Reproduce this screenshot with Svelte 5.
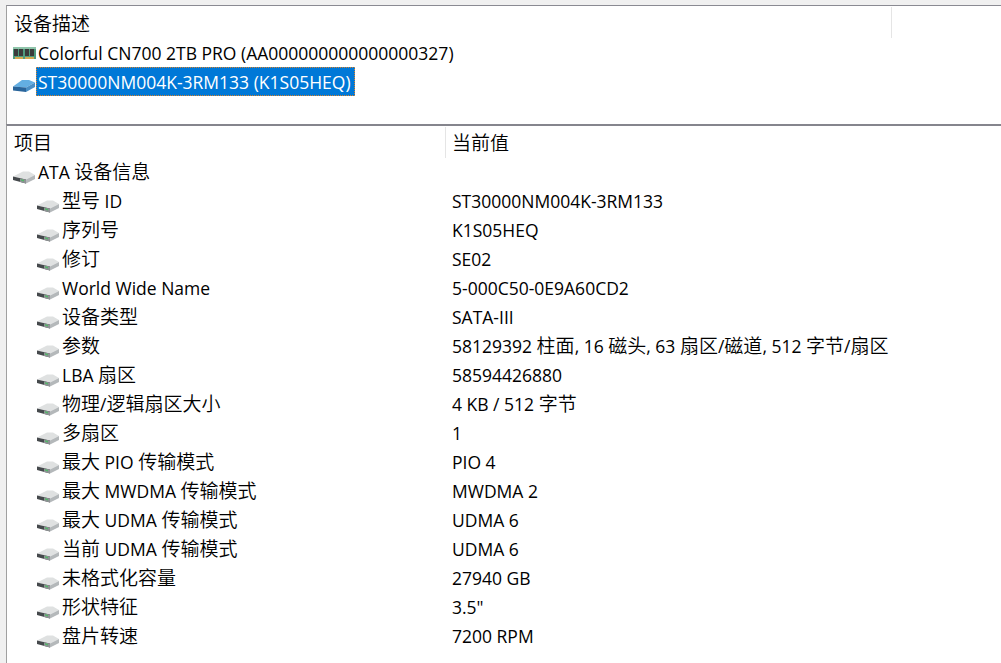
<script>
  const rows = [
    ['型号 ID', 'ST30000NM004K-3RM133'],
    ['序列号', 'K1S05HEQ'],
    ['修订', 'SE02'],
    ['World Wide Name', '5-000C50-0E9A60CD2'],
    ['设备类型', 'SATA-III'],
    ['参数', '58129392 柱面, 16 磁头, 63 扇区/磁道, 512 字节/扇区'],
    ['LBA 扇区', '58594426880'],
    ['物理/逻辑扇区大小', '4 KB / 512 字节'],
    ['多扇区', '1'],
    ['最大 PIO 传输模式', 'PIO 4'],
    ['最大 MWDMA 传输模式', 'MWDMA 2'],
    ['最大 UDMA 传输模式', 'UDMA 6'],
    ['当前 UDMA 传输模式', 'UDMA 6'],
    ['未格式化容量', '27940 GB'],
    ['形状特征', '3.5"'],
    ['盘片转速', '7200 RPM'],
  ]

  // Chinese runs are set larger than the Latin ones
  const runs = (text) => text.match(/[\u4e00-\u9fff]+|[^\u4e00-\u9fff]+/g) ?? []
  const isCjk = (run) => /[\u4e00-\u9fff]/.test(run)
</script>

{#snippet txt(text)}
  {#each runs(text) as run}<span class:cjk={isCjk(run)}>{run}</span>{/each}
{/snippet}

{#snippet driveIcon()}
  <svg class="icon" width="24" height="24" viewBox="0 0 24 24">
    <path d="M1 15.5 L11 10.5 H17 L23 14 L14 18.5Z" fill="#dfe1e1"/>
    <path d="M1 15.5 L14 18.5 V22.5 L1 19Z" fill="#45494c"/>
    <path d="M8 17.5 L14 18.5 V22.5 L8 21Z" fill="#8f9395"/>
    <path d="M14 18.5 L23 14 V18 L14 22.5Z" fill="#b4b8ba"/>
    <path d="M9 18.2 L12 19 V20.4 L9 19.6Z" fill="#4fb765"/>
  </svg>
{/snippet}

<div class="window">
  <section class="devices">
    <div class="head">
      <div class="col-device">{@render txt('设备描述')}</div>
    </div>
    <div class="device">
      <svg class="icon" width="24" height="24" viewBox="0 0 24 24">
        <rect x="1" y="6" width="23" height="12" fill="#4f9c7e"/>
        <rect x="1" y="6" width="23" height="2" fill="#8fc4aa"/>
        <rect x="2" y="8" width="4" height="7" fill="#3b3b3b"/>
        <rect x="7" y="8" width="4" height="7" fill="#3b3b3b"/>
        <rect x="13" y="8" width="4" height="7" fill="#3b3b3b"/>
        <rect x="18" y="8" width="4" height="7" fill="#3b3b3b"/>
        <rect x="3" y="16" width="8" height="2" fill="#d3a94f"/>
        <rect x="13" y="16" width="9" height="2" fill="#d3a94f"/>
      </svg>
      <span class="label">Colorful CN700 2TB PRO (AA000000000000000327)</span>
    </div>
    <div class="device">
      <svg class="icon" width="24" height="24" viewBox="0 0 24 24">
        <path d="M1 16.5 L10 10 H17 L23 12.5 L14 17.5Z" fill="#63aee2"/>
        <path d="M1 16.5 L14 17.5 V22 L1 20.5Z" fill="#2a659b"/>
        <path d="M14 17.5 L23 12.5 V17 L14 22Z" fill="#4a8fc6"/>
      </svg>
      <span class="label selected">ST30000NM004K-3RM133 (K1S05HEQ)</span>
    </div>
  </section>

  <section class="details">
    <div class="head">
      <div class="col-name">{@render txt('项目')}</div>
      <div class="col-value">{@render txt('当前值')}</div>
    </div>
    <div class="row group">
      <div class="col-name">{@render driveIcon()}<span class="label">{@render txt('ATA 设备信息')}</span></div>
    </div>
    {#each rows as [name, value]}
      <div class="row">
        <div class="col-name child">{@render driveIcon()}<span class="label">{@render txt(name)}</span></div>
        <div class="col-value">{@render txt(value)}</div>
      </div>
    {/each}
  </section>
</div>

<style>
  :global(body) {
    background: #f0f0f0;
    overflow: hidden;
  }
  .window {
    box-sizing: border-box;
    height: 663px;
    padding: 5px 0 0 6px;
    display: flex;
    flex-direction: column;
    font-family: "Open Sans", "Noto Sans CJK SC", sans-serif;
    font-size: 17.5px;
    color: #000;
    white-space: nowrap;
  }
  .cjk {
    font-size: 19px;
    line-height: 1;
    font-family: "Noto Sans CJK SC", sans-serif;
    font-weight: 350;
  }
  .devices {
    height: 118px;
    flex: none;
    background: #fff;
    border-top: 1px solid #8a8a92;
    border-left: 1px solid #a0a0a0;
  }
  .details {
    flex: 1;
    background: #fff;
    border-top: 2px solid #85858d;
    border-left: 1px solid #a0a0a0;
  }
  .head {
    display: flex;
    height: 32px;
    padding-top: 1px;
    box-sizing: border-box;
  }
  .head > div {
    height: 31px;
    line-height: 32px;
    box-sizing: border-box;
  }
  .devices .head > div {
    line-height: 34px;
  }
  .col-device {
    width: 885px;
    padding-left: 7px;
    border-right: 1px solid #e5e5e5;
  }
  .head .col-name {
    width: 439px;
    padding-left: 7px;
    border-right: 1px solid #e5e5e5;
  }
  .head .col-value {
    padding-left: 6px;
  }
  .device {
    display: flex;
    align-items: center;
    height: 29px;
    padding-left: 5px;
  }
  .icon {
    flex: none;
  }
  .label {
    line-height: 27px;
    padding: 2px 2px 0;
  }
  .device .selected {
    padding-right: 4px;
    background: #0078d7;
    color: #fff;
    outline: 1px dotted #d9822b;
    outline-offset: -1px;
  }
  .row {
    display: flex;
    align-items: center;
    height: 29px;
    line-height: 29px;
  }
  .row .label {
    padding: 0 2px;
    line-height: 29px;
  }
  .row .col-name {
    width: 445px;
    box-sizing: border-box;
    display: flex;
    align-items: center;
    padding-left: 5px;
  }
  .row .col-name.child {
    padding-left: 29px;
  }
</style>
